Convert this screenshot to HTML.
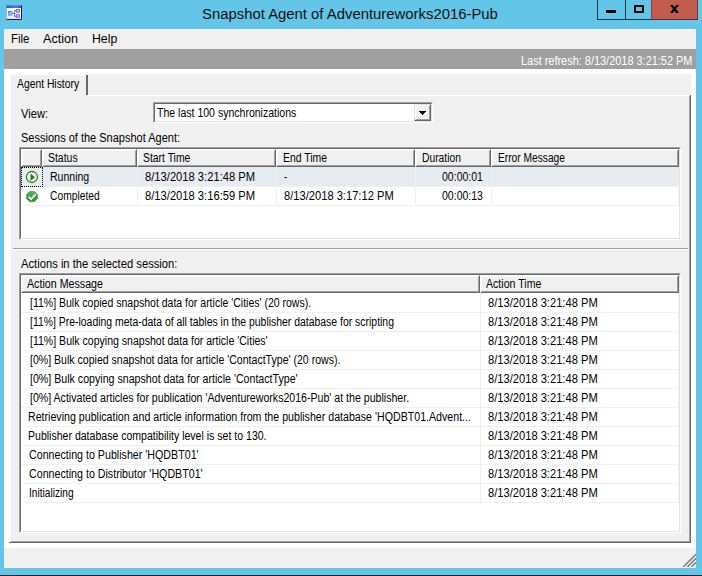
<!DOCTYPE html>
<html><head><meta charset="utf-8">
<style>
html,body{margin:0;padding:0}
body{width:702px;height:576px;overflow:hidden;background:#63c6e8;position:relative;font-family:"Liberation Sans",sans-serif;color:#000}
div,span{position:absolute;box-sizing:border-box}
svg{position:absolute}
.t{white-space:nowrap;line-height:16px;height:16px;transform-origin:0 50%}
.hd{background:#f0f0f0;border-top:1px solid #fff;border-left:1px solid #fff;border-right:1px solid #696969;border-bottom:1px solid #696969}
.hd:after{content:"";position:absolute;left:0;top:0;right:0;bottom:0;border-right:1px solid #a0a0a0;border-bottom:1px solid #a0a0a0;border-top:1px solid #f9f9f9;border-left:1px solid #f9f9f9}
.cb{border-top-color:#e3e3e3;border-left-color:#e3e3e3}.cb:after{border-top:1px solid #fff;border-left:1px solid #fff}
.lb{background:#fff;border-top:1px solid #a0a0a0;border-left:1px solid #a0a0a0;border-right:1px solid #fff;border-bottom:1px solid #fff}
.lb:before{content:"";position:absolute;left:0;top:0;right:0;bottom:0;border-top:1px solid #696969;border-left:1px solid #696969;border-right:1px solid #e3e3e3;border-bottom:1px solid #e3e3e3}
.hl{background:#f0f0f0;height:1px}
.vl{background:#f0f0f0;width:1px}
</style></head><body>
<!-- window frame / title bar -->
<div style="left:0;top:575px;width:702px;height:1px;background:#1a1a1a"></div>
<svg style="left:6px;top:5px" width="16" height="15" viewBox="0 0 16 15">
<defs><linearGradient id="ig" x1="0" y1="0" x2="1" y2="0"><stop offset="0" stop-color="#2b4fbd"/><stop offset="0.600" stop-color="#4a7be2"/><stop offset="1" stop-color="#2f55c4"/></linearGradient>
<linearGradient id="ib" x1="0" y1="0" x2="1" y2="1"><stop offset="0" stop-color="#2a6af0"/><stop offset="1" stop-color="#86c0ff"/></linearGradient>
<linearGradient id="iw" x1="0" y1="0" x2="0" y2="1"><stop offset="0.600" stop-color="#fff"/><stop offset="1" stop-color="#d8dcf8"/></linearGradient></defs>
<rect x="0" y="0" width="16" height="15" fill="url(#iw)"/>
<rect x="0" y="0" width="16" height="3" fill="url(#ig)"/>
<rect x="0.500" y="0.500" width="15" height="14" fill="none" stroke="#7f8fd0" stroke-opacity="0.700"/>
<path d="M15.500 0.500V14.500H0.500" fill="none" stroke="#1c2240"/>
<rect x="2.100" y="6.100" width="4.500" height="4.700" fill="url(#ib)"/>
<rect x="3.300" y="7.300" width="2.200" height="2.300" fill="#9ad0ff"/>
<rect x="10.100" y="4" width="3.800" height="3.700" fill="#7a66d8"/>
<rect x="11" y="4.900" width="2" height="1.900" fill="#c0b4f4"/>
<rect x="10.100" y="9.200" width="3.800" height="3.600" fill="#7a66d8"/>
<rect x="11" y="10.100" width="2" height="1.800" fill="#c0b4f4"/>
<path d="M6.600 8.500H8.700M10.100 5.500H8.700V11.400H10.100" fill="none" stroke="#2a5ee0" stroke-width="0.900"/>
</svg>
<!-- caption buttons -->
<div style="left:597px;top:0;width:54px;height:20px;border-left:1px solid #1c3a48;border-bottom:1px solid #1c3a48"></div>
<div style="left:625px;top:0;width:1px;height:20px;background:#1c3a48"></div>
<div style="left:651px;top:0;width:47px;height:20px;background:#c45b4f;border-bottom:1px solid #5a2a26;border-right:1px solid #7a352e;border-left:1px solid #8f4238"></div>
<div style="left:606px;top:10px;width:10px;height:3px;background:#000"></div>
<div style="left:634px;top:5px;width:10px;height:8px;border:2px solid #000"></div>
<svg style="left:669px;top:5px" width="11" height="8" viewBox="0 0 11 8"><path d="M1 0H4L5.500 2.300L7 0H10L7 4L10 8H7L5.500 5.700L4 8H1L4 4Z" fill="#000"/></svg>
<!-- client -->
<div style="left:4px;top:29px;width:692px;height:539px;background:#fff"></div>
<div style="left:4px;top:29px;width:692px;height:20px;background:#f0f0f0"></div>
<div style="left:4px;top:49px;width:692px;height:20px;background:#a0a0a0"></div>
<!-- tab control -->
<div style="left:88px;top:74px;width:603px;height:21px;background:#f0f0f0"></div>
<div style="left:10px;top:75px;width:78px;height:21px;background:#f0f0f0"></div>
<div style="left:86px;top:75px;width:2px;height:20px;background:#696969"></div>
<div style="left:10px;top:95px;width:681px;height:448px;background:#f0f0f0;border-right:1px solid #696969;border-bottom:1px solid #696969"></div>
<div style="left:88px;top:95px;width:601px;height:1px;background:#fff"></div>
<div style="left:689px;top:96px;width:1px;height:446px;background:#a0a0a0"></div>
<div style="left:11px;top:541px;width:679px;height:1px;background:#a0a0a0"></div>
<div style="left:9px;top:542px;width:2px;height:1px;background:#696969"></div>
<div style="left:10px;top:75px;width:1px;height:466px;background:#f8f8f8"></div>
<!-- combo -->
<div class="lb" style="left:153px;top:102px;width:280px;height:21px"></div>
<div class="hd cb" style="left:414px;top:104px;width:17px;height:17px"></div>
<svg style="left:419px;top:111px" width="7" height="4" viewBox="0 0 7 4" shape-rendering="crispEdges"><path d="M0 0H7V1H6V2H5V3H4V4H3V3H2V2H1V1H0Z" fill="#000"/></svg>
<!-- sessions list -->
<div class="lb" style="left:19px;top:147px;width:662px;height:93px"></div>
<div class="hd" style="left:21px;top:149px;width:21px;height:18px"></div>
<div class="hd" style="left:42px;top:149px;width:95px;height:18px"></div>
<div class="hd" style="left:137px;top:149px;width:139px;height:18px"></div>
<div class="hd" style="left:276px;top:149px;width:139px;height:18px"></div>
<div class="hd" style="left:415px;top:149px;width:76px;height:18px"></div>
<div class="hd" style="left:491px;top:149px;width:188px;height:18px"></div>
<div style="left:21px;top:167px;width:658px;height:19px;background:#e7ecf1"></div>
<div class="hl" style="left:21px;top:186px;width:658px"></div>
<div class="hl" style="left:21px;top:205px;width:658px"></div>
<div class="vl" style="left:137px;top:167px;height:39px"></div>
<div class="vl" style="left:276px;top:167px;height:39px"></div>
<div class="vl" style="left:415px;top:167px;height:39px"></div>
<div class="vl" style="left:491px;top:167px;height:39px"></div>
<div class="vl" style="left:678px;top:167px;height:39px"></div>
<div style="left:21px;top:167px;width:22px;height:20px;border:1px dotted #000"></div>
<svg style="left:25px;top:170px" width="14" height="14" viewBox="0 0 14 14"><circle cx="6.900" cy="7" r="5.500" fill="#fdf6f8" stroke="#268826" stroke-width="1.300"/><path d="M5.500 3.500L10 7.200L5.500 10.900Z" fill="#148514"/></svg>
<svg style="left:25px;top:189px" width="14" height="14" viewBox="0 0 14 14"><defs><linearGradient id="cg" x1="0" y1="0" x2="0" y2="1"><stop offset="0" stop-color="#5fb45f"/><stop offset="1" stop-color="#2c8c2c"/></linearGradient></defs><path d="M4.800 2.300H9.200L12.500 5.400V9.800L9.200 12.800H4.800L1.500 9.800V5.400Z" fill="url(#cg)" stroke="#3f9a3f" stroke-width="0.600" stroke-linejoin="round"/><path d="M3.800 7.900L6.100 10.300L10.600 5.200" fill="none" stroke="#fff" stroke-width="1.700"/></svg>
<!-- separator -->
<div style="left:13px;top:248px;width:675px;height:1px;background:#a0a0a0"></div>
<div style="left:13px;top:249px;width:675px;height:1px;background:#fff"></div>
<!-- actions list -->
<div class="lb" style="left:19px;top:273px;width:662px;height:260px"></div>
<div class="hd" style="left:21px;top:275px;width:459px;height:18px"></div>
<div class="hd" style="left:480px;top:275px;width:199px;height:18px"></div>
<div class="hl" style="left:21px;top:312px;width:658px"></div>
<div class="hl" style="left:21px;top:331px;width:658px"></div>
<div class="hl" style="left:21px;top:350px;width:658px"></div>
<div class="hl" style="left:21px;top:369px;width:658px"></div>
<div class="hl" style="left:21px;top:388px;width:658px"></div>
<div class="hl" style="left:21px;top:407px;width:658px"></div>
<div class="hl" style="left:21px;top:426px;width:658px"></div>
<div class="hl" style="left:21px;top:445px;width:658px"></div>
<div class="hl" style="left:21px;top:464px;width:658px"></div>
<div class="hl" style="left:21px;top:483px;width:658px"></div>
<div class="hl" style="left:21px;top:502px;width:658px"></div>
<div class="vl" style="left:480px;top:293px;height:210px"></div>
<div class="vl" style="left:678px;top:293px;height:210px"></div>
<!-- status bar -->
<div style="left:4px;top:548px;width:692px;height:20px;background:#f0f0f0"></div>
<svg style="left:682px;top:553px" width="14" height="14" viewBox="0 0 14 14"><path d="M2.500 14L14 2.500M6.500 14L14 6.500M10.500 14L14 10.500" stroke="#fff" stroke-width="1.200" fill="none"/><path d="M1.300 14L14 1.300M5.300 14L14 5.300M9.300 14L14 9.300" stroke="#808080" stroke-width="1.600" fill="none"/></svg>
<span class="t" style="left:201.80px;top:5.50px;font-size:15.3px;transform:scaleX(0.9718);color:#111">Snapshot Agent of Adventureworks2016-Pub</span>
<span class="t" style="left:11.40px;top:30.56px;font-size:12.8px;transform:scaleX(0.8973)">File</span>
<span class="t" style="left:42.60px;top:30.56px;font-size:12.8px;transform:scaleX(0.9817)">Action</span>
<span class="t" style="left:92.04px;top:30.56px;font-size:12.8px;transform:scaleX(0.9603)">Help</span>
<span class="t" style="left:520.93px;top:52.67px;font-size:12.5px;transform:scaleX(0.8749);color:#fff">Last refresh: 8/13/2018 3:21:52 PM</span>
<span class="t" style="left:17.30px;top:75.67px;font-size:12.5px;transform:scaleX(0.8274)">Agent History</span>
<span class="t" style="left:21.00px;top:105.67px;font-size:12.5px;transform:scaleX(0.8939)">View:</span>
<span class="t" style="left:157.20px;top:104.67px;font-size:12.5px;transform:scaleX(0.8424)">The last 100 synchronizations</span>
<span class="t" style="left:20.80px;top:129.67px;font-size:12.5px;transform:scaleX(0.8800)">Sessions of the Snapshot Agent:</span>
<span class="t" style="left:48.30px;top:149.67px;font-size:12.5px;transform:scaleX(0.8355)">Status</span>
<span class="t" style="left:143.30px;top:149.67px;font-size:12.5px;transform:scaleX(0.8317)">Start Time</span>
<span class="t" style="left:282.96px;top:149.67px;font-size:12.5px;transform:scaleX(0.8353)">End Time</span>
<span class="t" style="left:421.98px;top:149.67px;font-size:12.5px;transform:scaleX(0.8230)">Duration</span>
<span class="t" style="left:497.68px;top:149.67px;font-size:12.5px;transform:scaleX(0.8171)">Error Message</span>
<span class="t" style="left:50.26px;top:168.67px;font-size:12.5px;transform:scaleX(0.8419)">Running</span>
<span class="t" style="left:49.80px;top:187.67px;font-size:12.5px;transform:scaleX(0.8215)">Completed</span>
<span class="t" style="left:145.00px;top:168.67px;font-size:12.5px;transform:scaleX(0.8948)">8/13/2018 3:21:48 PM</span>
<span class="t" style="left:145.00px;top:187.67px;font-size:12.5px;transform:scaleX(0.8948)">8/13/2018 3:16:59 PM</span>
<span class="t" style="left:284.30px;top:168.67px;font-size:12.5px;transform:scaleX(0.7500)">-</span>
<span class="t" style="left:284.00px;top:187.67px;font-size:12.5px;transform:scaleX(0.8915)">8/13/2018 3:17:12 PM</span>
<span class="t" style="left:442.00px;top:168.67px;font-size:12.5px;transform:scaleX(0.8418)">00:00:01</span>
<span class="t" style="left:442.00px;top:187.67px;font-size:12.5px;transform:scaleX(0.8418)">00:00:13</span>
<span class="t" style="left:21.00px;top:255.67px;font-size:12.5px;transform:scaleX(0.8969)">Actions in the selected session:</span>
<span class="t" style="left:27.00px;top:275.67px;font-size:12.5px;transform:scaleX(0.8541)">Action Message</span>
<span class="t" style="left:486.30px;top:275.67px;font-size:12.5px;transform:scaleX(0.8479)">Action Time</span>
<span class="t" style="left:30.00px;top:294.67px;font-size:12.5px;transform:scaleX(0.8402)">[11%] Bulk copied snapshot data for article 'Cities' (20 rows).</span>
<span class="t" style="left:488.00px;top:294.67px;font-size:12.5px;transform:scaleX(0.8915)">8/13/2018 3:21:48 PM</span>
<span class="t" style="left:30.00px;top:313.67px;font-size:12.5px;transform:scaleX(0.8345)">[11%] Pre-loading meta-data of all tables in the publisher database for scripting</span>
<span class="t" style="left:488.00px;top:313.67px;font-size:12.5px;transform:scaleX(0.8915)">8/13/2018 3:21:48 PM</span>
<span class="t" style="left:30.00px;top:332.67px;font-size:12.5px;transform:scaleX(0.8433)">[11%] Bulk copying snapshot data for article 'Cities'</span>
<span class="t" style="left:488.00px;top:332.67px;font-size:12.5px;transform:scaleX(0.8915)">8/13/2018 3:21:48 PM</span>
<span class="t" style="left:30.00px;top:351.67px;font-size:12.5px;transform:scaleX(0.8447)">[0%] Bulk copied snapshot data for article 'ContactType' (20 rows).</span>
<span class="t" style="left:488.00px;top:351.67px;font-size:12.5px;transform:scaleX(0.8915)">8/13/2018 3:21:48 PM</span>
<span class="t" style="left:30.00px;top:370.67px;font-size:12.5px;transform:scaleX(0.8505)">[0%] Bulk copying snapshot data for article 'ContactType'</span>
<span class="t" style="left:488.00px;top:370.67px;font-size:12.5px;transform:scaleX(0.8915)">8/13/2018 3:21:48 PM</span>
<span class="t" style="left:30.00px;top:389.67px;font-size:12.5px;transform:scaleX(0.8474)">[0%] Activated articles for publication 'Adventureworks2016-Pub' at the publisher.</span>
<span class="t" style="left:488.00px;top:389.67px;font-size:12.5px;transform:scaleX(0.8915)">8/13/2018 3:21:48 PM</span>
<span class="t" style="left:28.15px;top:408.67px;font-size:12.5px;transform:scaleX(0.8507)">Retrieving publication and article information from the publisher database 'HQDBT01.Advent...</span>
<span class="t" style="left:488.00px;top:408.67px;font-size:12.5px;transform:scaleX(0.8915)">8/13/2018 3:21:48 PM</span>
<span class="t" style="left:28.16px;top:427.67px;font-size:12.5px;transform:scaleX(0.8435)">Publisher database compatibility level is set to 130.</span>
<span class="t" style="left:488.00px;top:427.67px;font-size:12.5px;transform:scaleX(0.8915)">8/13/2018 3:21:48 PM</span>
<span class="t" style="left:29.00px;top:446.67px;font-size:12.5px;transform:scaleX(0.8540)">Connecting to Publisher 'HQDBT01'</span>
<span class="t" style="left:488.00px;top:446.67px;font-size:12.5px;transform:scaleX(0.8915)">8/13/2018 3:21:48 PM</span>
<span class="t" style="left:29.00px;top:465.67px;font-size:12.5px;transform:scaleX(0.8534)">Connecting to Distributor 'HQDBT01'</span>
<span class="t" style="left:488.00px;top:465.67px;font-size:12.5px;transform:scaleX(0.8915)">8/13/2018 3:21:48 PM</span>
<span class="t" style="left:28.69px;top:484.67px;font-size:12.5px;transform:scaleX(0.8121)">Initializing</span>
<span class="t" style="left:488.00px;top:484.67px;font-size:12.5px;transform:scaleX(0.8915)">8/13/2018 3:21:48 PM</span>
</body></html>
